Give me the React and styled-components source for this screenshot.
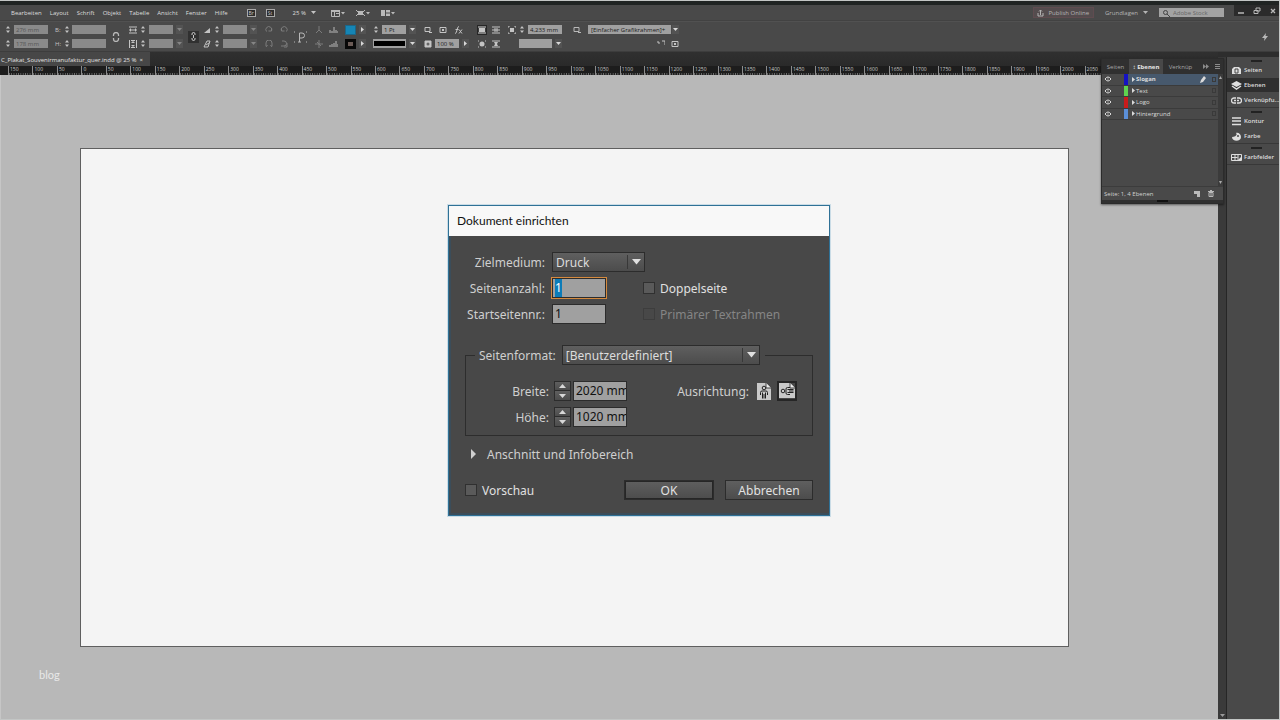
import React, { useEffect, useRef } from "react";
import styled, { createGlobalStyle, css } from "styled-components";

const GlobalStyle = createGlobalStyle`
  *, *::before, *::after { box-sizing: border-box; }
  body { margin: 0; background: #b8b8b8; }
  button, input, select { font: inherit; color: inherit; margin: 0; padding: 0; border: 0; background: none; border-radius: 0; }
  button { cursor: pointer; }
`;

/* ---------- shell ---------- */

const Shell = styled.div`
  display: flex;
  flex-direction: column;
  min-height: 100vh;
  overflow: hidden;
  border: solid #c3c6c5;
  border-width: 1px 1px 1px 0;
  background: #2d2d2d;
  color: #c4c4c4;
  font: 6px/8px "Open Sans", "Noto Sans", sans-serif;
`;

const MenuBar = styled.header`
  display: flex;
  align-items: center;
  height: 20px;
  padding-left: 11px;
  border-top: 4px solid #202423;
  background: #494949;
  border-bottom: 1px solid #424242;
`;

const Menus = styled.nav`
  display: flex;
  gap: 8px;
  margin-right: 19px;
`;

const MenuItem = styled.button`
  color: #dedede;
`;

const BarTools = styled.div`
  display: flex;
  align-items: center;
  gap: ${(p) => p.$gap}px;
  margin-right: ${(p) => p.$after || 0}px;
`;

const BridgeButton = styled.button`
  width: 9px;
  height: 8px;
  border: 1px solid #a9a9a9;
  background: #2c2c2c;
  color: #c8c8c8;
  font-size: 5px;
  line-height: 6px;
  text-align: center;
`;

const IconButton = styled.button`
  display: flex;
  align-items: center;
  justify-content: center;
  color: ${(p) => (p.$dim ? "#7c7c7c" : "#b9b9b9")};
`;

const Spacer = styled.div`
  flex: 1;
`;

const PublishButton = styled.button`
  display: flex;
  align-items: center;
  gap: 4px;
  height: 11px;
  padding: 0 4px 0 3px;
  margin-right: 11px;
  border: 1px solid #604c50;
  background: #544c4e;
  color: #b4b4b4;
`;

const WorkspaceButton = styled.button`
  display: flex;
  align-items: center;
  gap: 5px;
  margin-right: 11px;
  color: #b5b5b5;
`;

const Search = styled.label`
  display: flex;
  align-items: center;
  gap: 3px;
  width: 65px;
  height: 9px;
  padding-left: 3px;
  background: #a3a3a3;
  color: #444;
  input { width: 50px; height: 8px; }
  input::placeholder { color: #666; opacity: 1; }
`;

const WindowControls = styled.div`
  display: flex;
  align-self: flex-start;
  align-items: center;
  justify-content: space-between;
  width: 45px;
  height: 11px;
  margin-left: 10px;
  padding: 0 3px 0 4px;
  background: #2b2b2b;
  color: #ddd;
`;

/* ---------- control bar ---------- */

const ControlBar = styled.div`
  display: flex;
  align-items: center;
  height: 31px;
  padding: 0 10px 0 5px;
  background: #494949;
  border-top: 1px solid #515151;
  border-bottom: 1px solid #3d3d3d;
`;

const Stack = styled.div`
  display: flex;
  flex-direction: column;
  gap: 4px;
  margin-right: ${(p) => p.$after}px;
`;

const Line = styled.div`
  display: flex;
  align-items: center;
  justify-content: ${(p) => (p.$end ? "flex-end" : "flex-start")};
  gap: ${(p) => p.$gap || 3}px;
  height: 10px;
`;

const AxisLabel = styled.span`
  width: 7px;
`;

const BarField = styled.input`
  width: ${(p) => p.$w}px;
  height: 9px;
  padding-left: 2px;
  background: ${(p) => (p.$off ? "#8a8a8a" : "#a0a0a0")};
  color: ${(p) => (p.$off ? "#555" : "#1c1c1c")};
`;

const BarSelect = styled.select`
  appearance: none;
  width: ${(p) => p.$w}px;
  height: 9px;
  padding-left: 3px;
  background: #a0a0a0;
  color: #1c1c1c;
`;

const StrokeSelect = styled(BarSelect)`
  background: #000;
  border: solid #a0a0a0;
  border-width: 2px 1px;
  color: #000;
`;

const ArrowButton = styled.button`
  display: flex;
  align-items: center;
  justify-content: center;
  width: 7px;
  height: 9px;
  background: #535353;
  color: ${(p) => (p.$dim ? "#858585" : "#d8d8d8")};
`;

const LinkBox = styled.button`
  display: flex;
  align-items: center;
  justify-content: center;
  width: 11px;
  height: 12px;
  margin-right: 4px;
  background: #303030;
  color: #c8c8c8;
`;

const ActiveWrap = styled.button`
  display: flex;
  outline: 1px solid #262626;
  background: #3a3a3a;
`;

const Glyph = styled.span`
  display: flex;
  margin-right: ${(p) => p.$after}px;
  color: #b9b9b9;
`;

const Swatch = styled.button`
  width: 11px;
  height: 10px;
  background: ${(p) => (p.$fill ? "#1585b5" : "#6a5a55")};
  border: ${(p) => (p.$fill ? "1px solid #1c6688" : "3px solid #080808")};
`;

/* ---------- document area ---------- */

const Main = styled.div`
  display: flex;
  flex: 1;
`;

const DocumentColumn = styled.div`
  position: relative;
  display: flex;
  flex: 1;
  flex-direction: column;
  min-width: 0;
`;

const TabStrip = styled.div`
  display: flex;
  height: 14px;
  background: linear-gradient(#303030, #2a2a2a);
`;

const DocTab = styled.div`
  display: flex;
  align-items: center;
  gap: 3px;
  width: 150px;
  padding: 1px 0 0 1px;
  background: #474747;
  color: #e2e2e2;
  white-space: nowrap;
`;

const Ruler = styled.div`
  display: grid;
  grid-template-columns: repeat(45, 1fr);
  height: 9px;
  padding: 0 109px 0 8px;
  background: #1d1d1d;
  color: #c8c8c8;
  font-size: 5px;
  line-height: 7px;
`;

const RulerMark = styled.span`
  padding-left: 1px;
  border-left: 1px solid #8d8d8d;
  background: linear-gradient(90deg, #747474 1px, transparent 1px) 0 100% / 10% 2px repeat-x;
`;

const Canvas = styled.main`
  display: flex;
  flex: 1;
  padding: 73px 149px 72px 79px;
  background: #b8b8b8;
  border-left: 1px solid #c6c6c6;
`;

const Artboard = styled.div`
  flex: 1;
  border: 1px solid #5f5f5f;
  background: #f4f4f4;
`;

const Watermark = styled.span`
  position: absolute;
  left: 39px;
  bottom: 37px;
  color: #e8e8e8;
  font: 11px/14px Lato, sans-serif;
`;

const ScrollTrack = styled.div`
  display: flex;
  align-items: flex-end;
  justify-content: center;
  width: 9px;
  margin-top: 5px;
  padding-bottom: 2px;
  background: #3a3a3a;
  border-right: 1px solid #262626;
  color: #999;
`;

/* ---------- dock ---------- */

const Dock = styled.aside`
  width: 52px;
  margin-top: 5px;
  background: #494949;
`;

const DockGroup = styled.div`
  display: flex;
  flex-direction: column;
  gap: 1px;
  border-bottom: 1px solid #383838;
`;

const Grip = styled.span`
  display: block;
  width: 11px;
  height: 2px;
  margin: ${(p) => (p.$bottom ? "0 auto" : "3px auto 0 24px")};
  background: ${(p) => (p.$bottom ? "#111" : "#222")};
`;

const DockItem = styled.button`
  display: flex;
  align-items: center;
  gap: 2px;
  height: 14px;
  padding-left: 4px;
  background: ${(p) => (p.$active ? "#2f2f2f" : "transparent")};
  color: #dedede;
  font-weight: 600;
  white-space: nowrap;
  svg { flex-shrink: 0; }
`;

/* ---------- layers panel ---------- */

const LayersPanel = styled.section`
  position: absolute;
  top: 6px;
  right: -6px;
  width: 123px;
  border: 1px solid #2b2b2b;
  background: #494949;
  box-shadow: 0 1px 2px rgba(0, 0, 0, 0.5);
`;

const PanelTabs = styled.div`
  display: flex;
  align-items: stretch;
  height: 15px;
  background: #303030;
`;

const PanelTab = styled.button`
  width: ${(p) => p.$w}px;
  background: ${(p) => (p.$active ? "#484848" : "transparent")};
  color: ${(p) => (p.$active ? "#e6e6e6" : "#a6a6a6")};
  font-weight: ${(p) => (p.$active ? 700 : 400)};
  text-align: center;
`;

const PanelMenu = styled.div`
  display: flex;
  flex: 1;
  align-items: center;
  justify-content: flex-end;
  gap: 6px;
  padding-right: 3px;
  color: #8b8b8b;
`;

const PanelBody = styled.div`
  display: flex;
  height: 112px;
`;

const LayerList = styled.ul`
  display: grid;
  flex: 1;
  grid-template-rows: repeat(4, 1fr);
  height: 46px;
  margin: 0;
  padding: 0;
  list-style: none;
`;

const LayerRow = styled.li`
  display: flex;
  align-items: center;
  padding: 0 2px 0 3px;
  border-bottom: 1px solid #3b3b3b;
  background: ${(p) => (p.$active ? "linear-gradient(90deg, #494949 22px, #47596d 22px)" : "transparent")};
  color: #dadada;
  font-weight: ${(p) => (p.$active ? 700 : 400)};
`;

const LayerColor = styled.span`
  align-self: stretch;
  width: 4px;
  margin: 0 4px 0 13px;
  background: ${(p) => p.$c};
`;

const LayerName = styled.span`
  flex: 1;
  padding-left: 1px;
`;

const LayerSquare = styled.span`
  width: 4px;
  height: 5px;
  margin-left: 6px;
  border: 1px solid #3a3a3a;
`;

const PanelScroll = styled.div`
  display: flex;
  flex-direction: column;
  align-items: center;
  justify-content: space-between;
  width: 5px;
  padding: 2px 0;
  background: #3b3b3b;
  color: #aaa;
`;

const PanelFooter = styled.div`
  display: flex;
  align-items: center;
  gap: 8px;
  height: 14px;
  padding: 0 9px 0 2px;
  border-top: 1px solid #3c3c3c;
  color: #d0d0d0;
`;

const PanelEdge = styled.div`
  height: 3px;
  background: #303030;
`;

/* ---------- dialog ---------- */

const Overlay = styled.div`
  position: fixed;
  inset: 0;
  display: flex;
  align-items: center;
  justify-content: center;
  padding: 1px 2px 0 0;
`;

const Dialog = styled.form`
  width: 382px;
  border: 1px solid #2f7196;
  box-shadow: 0 0 0 1px rgba(160, 195, 215, 0.5);
  color: #cfcfcf;
  font: 12px/20px "Noto Sans", "Open Sans", sans-serif;
`;

const DialogTitle = styled.h1`
  margin: 0;
  padding-left: 8px;
  background: #f8f8f8;
  color: #111;
  font: 12px/30px Lato, "Open Sans", sans-serif;
`;

const DialogBody = styled.div`
  padding: 16px 16px 15px;
  background: #484848;
  box-shadow: inset 2px -2px 0 #3b4d5a;
`;

const FormGrid = styled.div`
  display: grid;
  grid-template-columns: 80px 84px 1fr;
  grid-auto-rows: 20px;
  gap: 6px 7px;
`;

const FieldLabel = styled.label`
  padding-top: 1px;
  text-align: right;
  white-space: nowrap;
`;

const bevel = css`
  border: 1px solid #2c2c2c;
  background: linear-gradient(#5f5f5f, #4c4c4c);
`;

const SelectWrap = styled.span`
  display: flex;
  position: relative;
  width: ${(p) => p.$w}px;
  height: 20px;
  svg { position: absolute; right: 4px; top: 7px; pointer-events: none; color: #e0e0e0; }
  &::after { content: ""; position: absolute; right: 17px; top: 3px; bottom: 3px; width: 1px; background: #383838; }
`;

const DialogSelect = styled.select`
  ${bevel}
  appearance: none;
  width: 100%;
  padding-left: 3px;
  color: #dcdcdc;
`;

const TextInput = styled.input`
  width: 54px;
  height: 20px;
  padding-left: 2px;
  border: 1px solid #2c2c2c;
  background: #a0a0a0;
  color: #111;
  outline: none;
  &:focus { outline: 1px solid #d58a3e; }
  &::selection { background: #0d7cb8; color: #fff; }
`;

const CheckLabel = styled.label`
  display: flex;
  align-items: center;
  gap: 5px;
  height: 20px;
  white-space: nowrap;
  color: ${(p) => (p.$off ? "#858585" : "#e0e0e0")};
  span { padding-top: 2px; }
`;

const CheckBox = styled.input`
  appearance: none;
  width: 12px;
  height: 12px;
  && { border: 1px solid ${(p) => (p.disabled ? "#3d3d3d" : "#303030")}; }
  && { background: ${(p) => (p.disabled ? "#484848" : "#5a5a5a")}; }
`;

const FormatGroup = styled.fieldset`
  margin: 21px 0 0;
  padding: 16px 15px 8px 8px;
  min-width: 0;
  border: 1px solid #2d2d2d;
`;

const FormatLegend = styled.legend`
  display: flex;
  align-items: center;
  gap: 6px;
  height: 20px;
  margin-left: 1px;
  padding: 0 5px 0 4px;
`;

const SizeLayout = styled.div`
  display: flex;
  align-items: flex-start;
  justify-content: space-between;
`;

const SizeGrid = styled.div`
  display: grid;
  grid-template-columns: 78px 17px 54px;
  grid-auto-rows: 20px;
  column-gap: 2px;
  row-gap: 6px;
  label { padding-right: 3px; }
`;

const Stepper = styled.span`
  display: grid;
  height: 20px;
  grid-template-rows: 1fr 1fr;
  button { ${bevel} display: flex; align-items: center; justify-content: center; color: #d8d8d8; }
  button + button { border-top: 0; }
`;

const Orientation = styled.div`
  display: flex;
  align-items: center;
  gap: 3px;
  height: 20px;
`;

const OrientLabel = styled.span`
  margin-right: 2px;
  padding-top: 2px;
`;

const OrientButton = styled.button`
  display: flex;
  align-items: center;
  justify-content: center;
  width: 20px;
  height: 20px;
  && { border: 2px solid ${(p) => (p.$active ? "#262626" : "transparent")}; }
`;

const Disclosure = styled.button`
  && { display: flex; align-items: center; gap: 10px; height: 20px; margin-top: 8px; padding-left: 6px; }
  span { padding-top: 2px; }
`;

const Actions = styled.div`
  display: flex;
  align-items: center;
  gap: 11px;
  margin-top: 16px;
`;

const ActionButton = styled.button`
  ${bevel}
  width: ${(p) => (p.$primary ? 90 : 88)}px;
  height: 20px;
  && { padding-top: 1px; }
  color: #e2e2e2;
  line-height: 17px;
  outline: ${(p) => (p.$primary ? "1px solid #262626" : "none")};
  outline-offset: -2px;
`;

/* ---------- drawings ---------- */

const Svg = ({ w = 8, h = 8, children }) => (
  <svg width={w} height={h} viewBox={`0 0 ${w} ${h}`} fill="none" stroke="currentColor" aria-hidden="true">
    {children}
  </svg>
);

const solid = { fill: "currentColor", stroke: "none" };
const Down = ({ big }) =>
  big ? <Svg w={9} h={6}><path d="M0 0h9L4.500 5.500z" {...solid} /></Svg> : <Svg w={5} h={3}><path d="M0 0h5L2.500 3z" {...solid} /></Svg>;
const StepArrow = ({ up }) => <Svg w={7} h={4}><path d={up ? "M0 4h7L3.500 0z" : "M0 0h7L3.500 4z"} {...solid} /></Svg>;
const Right = () => <Svg w={3} h={5}><path d="M0 0v5L3 2.500z" {...solid} /></Svg>;
const Steps = () => (
  <Svg w={6} h={9}><path d="M1 3.500h4L3 1zM1 5.500h4L3 8z" {...solid} /></Svg>
);

const paths = {
  frame: <path d="M1 1.500h5v4H1zM5 6.500h3" />,
  effect: <><path d="M1 1.500h6v5H1z" /><path d="M3 3h2v2H3z" {...solid} /></>,
  wide: <><path d="M0 1h8M0 7h8" /><path d="M0 4l2-2v4zM8 4L6 2v4zM2 3.500h4v1H2z" {...solid} /></>,
  tall: <><path d="M.5 0v8M7.500 0v8M2 .5h4M2 7.500h4" /><path d="M4 1l2 2H2zM4 7l2-2H2z" {...solid} /></>,
  angle: <path d="M1 7h6V2z" {...solid} />,
  shear: <path d="M1 7l3-6h3L5 7zM3 5l3-2" />,
  cw: <path d="M1.500 5.500A3 3 0 1 1 6.500 5M6.500 2v3h-3" />,
  ccw: <path d="M6.500 5.500A3 3 0 1 0 1.500 5M1.500 2v3h3" />,
  flipH: <path d="M1 6V3a3 3 0 0 1 6 0v3M2.500 5L1 7M5.500 5L7 7" />,
  flipV: <path d="M2 1h2a2 2 0 0 1 0 5H1M7 3v4H4" />,
  tree: <path d="M4 0v4M4 4L1 7M4 4l3 3" />,
  cross: <path d="M4 0v8M0 4h8M2 2l4 4" />,
  wrapOff: <><path d="M0 1h8M0 7h8" /><path d="M1 2h6v4H1z" {...solid} /></>,
  wrapBox: <><path d="M0 1h8M0 7h8M0 4h8" /><path d="M2 2h4v4H2z" fill="currentColor" opacity=".5" stroke="none" /></>,
  wrapShape: <><path d="M0 1h1M7 1h1M0 7h1M7 7h1" /><circle cx="4" cy="4" r="2.500" {...solid} /></>,
  wrapJump: <><path d="M0 1h8M0 7h8" /><path d="M2 2h4L5 4l1 2H2l1-2z" {...solid} /></>,
  corner: <><path d="M0 2V0h2M6 0h2v2M8 6v2H6M2 8H0V6" /><path d="M2 2h4v4H2z" {...solid} /></>,
  opacity: <><path d="M1 1h6v6H1z" fill="currentColor" /><circle cx="4" cy="4" r="1.500" fill="#666" stroke="none" /></>,
  bolt: <path d="M5 0L1 5h2.500L3 8l4-5H4.500z" {...solid} />,
  clip: <path d="M0 2h2v2M5 1h3v4" />,
};
const Icon = ({ n }) => <Svg>{paths[n]}</Svg>;

const Chain = () => (
  <Svg w={7} h={9}><path d="M2 3V2a1.500 1.500 0 0 1 3 0v1M2 6v1a1.500 1.500 0 0 0 3 0V6M3.500 3v3" /></Svg>
);
const OpenChain = () => (
  <Svg w={8} h={10}><path d="M1.500 4V3a2.500 2.500 0 0 1 5 0v1M1.500 6v1a2.500 2.500 0 0 0 5 0V6" strokeWidth="1.300" /></Svg>
);

const dockIcons = {
  pages: <><path d="M1 3l2-2h5l2 2v5H1z" {...solid} /><path d="M4 3h3v4H4z" stroke="#484848" /></>,
  layers: <><path d="M5.500 0L11 3 5.500 6 0 3z" {...solid} /><path d="M1 5l4.500 3L10 5" strokeWidth="1.500" /></>,
  links: <path d="M5 2H3a2 2 0 0 0 0 5h2M6 2h2a2 2 0 0 1 0 5H6M3 4.500h2M6 4.500h2" strokeWidth="1.300" />,
  stroke: <path d="M1 1h9M1 4h9M1 7.500h9" strokeWidth="1.300" />,
  color: <><path d="M1 5c0 5 9 5 9 0 0-3-3-5-5-4 2 2-1 4-4 4z" {...solid} /><circle cx="7" cy="4" r="1" fill="#484848" stroke="none" /></>,
  swatch: <><path d="M.5 1.500h10v6H.5zM.5 4.500h6M4 1.500v6M7 1.500v6" /><path d="M7 7l3-3v3z" {...solid} /></>,
};
const DockIcon = ({ n }) => <Svg w={11} h={9}>{dockIcons[n]}</Svg>;

const Person = ({ side }) => (
  <svg width="16" height="18" viewBox="0 0 16 18" aria-hidden="true">
    <path d={side ? "M0 1h11l5 5v10H0z" : "M1 1h9l5 5v12H1z"} fill="#c9c9c9" />
    <path d={side ? "M11 1v5h5" : "M10 1v5h5"} fill="#eee" stroke="#444" strokeWidth="1" />
    <g fill="none" stroke="#222" transform={side ? "rotate(-90 8 9)" : "translate(0 1)"}>
      <circle cx="8" cy="5" r="1.800" />
      <path d="M4.500 12V9.500q0-1.500 1.500-1.500h4q1.500 0 1.500 1.500V12M6.500 9.500v6M9.500 9.500v6M8 11v4.500" />
    </g>
  </svg>
);

/* ---------- sections ---------- */

const menus = ["Bearbeiten", "Layout", "Schrift", "Objekt", "Tabelle", "Ansicht", "Fenster", "Hilfe"];

function TopMenu() {
  return (
    <MenuBar>
      <Menus>{menus.map((m) => <MenuItem key={m} type="button">{m}</MenuItem>)}</Menus>
      <BarTools $gap={10} $after={18}>
        <BridgeButton type="button">Br</BridgeButton>
        <BridgeButton type="button">St</BridgeButton>
      </BarTools>
      <BarTools $gap={5} $after={15}>
        <MenuItem type="button">25 %</MenuItem>
        <Down />
      </BarTools>
      <BarTools $gap={11}>
        <IconButton type="button" aria-label="Anzeigeoptionen">
          <Svg w={14}><path d="M.5 1.500h8v6h-8zM3.500 3v4M5 4.500h3" /><path d="M0 1h9v2H0zM10 3h4l-2 2.500z" {...solid} /></Svg>
        </IconButton>
        <IconButton type="button" aria-label="Bildschirmmodus">
          <Svg w={14}><path d="M0 1l2 2M9 1L7 3M0 7l2-2M9 7L7 5" /><path d="M2 2h5v4H2zM10 3h4l-2 2.500z" {...solid} /></Svg>
        </IconButton>
        <IconButton type="button" aria-label="Dokumente anordnen">
          <Svg w={14}><path d="M0 1h4v6H0zM5 1h4v2.500H5zM5 4.500h4V7H5zM10 3h4l-2 2.500z" {...solid} /></Svg>
        </IconButton>
      </BarTools>
      <Spacer />
      <PublishButton type="button"><Svg w={7}><path d="M1 4v3h5V4M3.500 6V1M2 2.500L3.500 1 5 2.500" /></Svg>Publish Online</PublishButton>
      <WorkspaceButton type="button">Grundlagen<Down /></WorkspaceButton>
      <Search>
        <Svg><circle cx="3.500" cy="3.500" r="2" /><path d="M5 5l3 3" /></Svg>
        <input aria-label="Adobe Stock" placeholder="Adobe Stock" />
      </Search>
      <WindowControls>
        <IconButton type="button" aria-label="Minimieren"><Svg w={6}><path d="M0 6h6" strokeWidth="1.500" /></Svg></IconButton>
        <IconButton type="button" aria-label="Verkleinern"><Svg><path d="M3 1h4v3H3zM1 3.500h4v3H1z" /></Svg></IconButton>
        <IconButton type="button" aria-label="Schließen"><Svg w={6}><path d="M1 2l4 4M5 2L1 6" strokeWidth="1.300" /></Svg></IconButton>
      </WindowControls>
    </MenuBar>
  );
}

const Arrow = ({ label, dim, side }) => (
  <ArrowButton type="button" aria-label={label} $dim={dim}>{side ? <Right /> : <Down />}</ArrowButton>
);

function Controls() {
  return (
    <ControlBar>
      <Stack $after={7}>
        <Line><Steps /><BarField aria-label="X-Position" $w={34} $off defaultValue="276 mm" /></Line>
        <Line><Steps /><BarField aria-label="Y-Position" $w={34} $off defaultValue="178 mm" /></Line>
      </Stack>
      <Stack $after={6}>
        <Line $gap={2}><AxisLabel>B:</AxisLabel><Steps /><BarField aria-label="Breite des Objekts" $w={34} $off /></Line>
        <Line $gap={2}><AxisLabel>H:</AxisLabel><Steps /><BarField aria-label="Höhe des Objekts" $w={34} $off /></Line>
      </Stack>
      <Glyph $after={9}><OpenChain /></Glyph>
      <Stack $after={5}>
        {[["wide", "Skalierung X"], ["tall", "Skalierung Y"]].map(([n, l]) => (
          <Line key={n}><Icon n={n} /><Steps /><BarField aria-label={l} $w={24} $off /><Arrow label={l + " wählen"} dim /></Line>
        ))}
      </Stack>
      <LinkBox type="button" aria-label="Proportionen beibehalten"><Chain /></LinkBox>
      <Stack $after={8}>
        {[["angle", "Drehwinkel"], ["shear", "Scherwinkel"]].map(([n, l]) => (
          <Line key={n}><Icon n={n} /><Steps /><BarField aria-label={l} $w={24} $off /><Arrow label={l + " wählen"} dim /></Line>
        ))}
      </Stack>
      <Stack $after={6}>
        <Line $gap={7}>
          <IconButton $dim type="button" aria-label="Im Uhrzeigersinn drehen"><Icon n="cw" /></IconButton>
          <IconButton $dim type="button" aria-label="Gegen Uhrzeigersinn drehen"><Icon n="ccw" /></IconButton>
        </Line>
        <Line $gap={7}>
          <IconButton $dim type="button" aria-label="Horizontal spiegeln"><Icon n="flipH" /></IconButton>
          <IconButton $dim type="button" aria-label="Vertikal spiegeln"><Icon n="flipV" /></IconButton>
        </Line>
      </Stack>
      <Glyph $after={7}>
        <Svg w={14} h={14}><path d="M5.500 12V3h2.500a2 2 0 0 1 0 5H5.500M4 12h3" /><path d="M0 2h2M12 2h2M0 12h2M12 12h2" strokeDasharray="1 1" /></Svg>
      </Glyph>
      <Stack $after={7}>
        <Line $gap={6}>
          <IconButton $dim type="button" aria-label="Container auswählen"><Icon n="tree" /></IconButton>
          <IconButton type="button" aria-label="Vorheriges Objekt"><Svg w={9}><path d="M1 7V4M3 7V5M5 7V1M7 7V4M9 7V5" /></Svg></IconButton>
        </Line>
        <Line $gap={6}>
          <IconButton $dim type="button" aria-label="Inhalt auswählen"><Icon n="cross" /></IconButton>
          <IconButton type="button" aria-label="Nächstes Objekt"><Svg w={9}><path d="M1 7V5M3 7V4M5 7V3M7 7V1M9 7V4" /></Svg></IconButton>
        </Line>
      </Stack>
      <Stack $after={7}>
        <Line><Swatch type="button" aria-label="Fläche" $fill /><Arrow label="Fläche wählen" side /></Line>
        <Line><Swatch type="button" aria-label="Kontur" /><Arrow label="Kontur wählen" side /></Line>
      </Stack>
      <Stack $after={8}>
        <Line><Steps /><BarField aria-label="Konturstärke" $w={24} defaultValue="1 Pt" /><Arrow label="Stärke wählen" /></Line>
        <Line><StrokeSelect aria-label="Konturart" $w={33}><option>Durchgezogen</option></StrokeSelect><Arrow label="Art wählen" /></Line>
      </Stack>
      <Stack $after={9}>
        <Line $gap={7}>
          <Icon n="frame" />
          <Icon n="effect" />
          <Svg w={9}><path d="M1 7.500q1.500 0 2-3.500t2-3.500M1.500 3.500h3M5 3.500l3 4M8 3.500l-3 4" /></Svg>
        </Line>
        <Line><Icon n="opacity" /><BarField aria-label="Deckkraft" $w={24} defaultValue="100 %" /><Arrow label="Deckkraft wählen" side /></Line>
      </Stack>
      <Stack $after={8}>
        <Line $gap={6}>
          <ActiveWrap type="button" aria-label="Kein Textumfluss"><Icon n="wrapOff" /></ActiveWrap>
          <Icon n="wrapBox" />
        </Line>
        <Line $gap={6}><Icon n="wrapShape" /><Icon n="wrapJump" /></Line>
      </Stack>
      <Stack $after={11}>
        <Line><Icon n="corner" /><Steps /><BarField aria-label="Eckengröße" $w={34} defaultValue="4,233 mm" /></Line>
        <Line $end><BarSelect aria-label="Eckenform" $w={33}><option></option></BarSelect><Arrow label="Ecken wählen" /></Line>
      </Stack>
      <Stack $after={0}>
        <Line $gap={1}>
          <Glyph $after={6}><Icon n="frame" /></Glyph>
          <BarSelect aria-label="Objektformat" $w={83}><option>[Einfacher Grafikrahmen]+</option></BarSelect>
          <Arrow label="Format wählen" />
        </Line>
        <Line $end $gap={6}><Icon n="clip" /><Icon n="effect" /></Line>
      </Stack>
      <Spacer />
      <IconButton type="button" aria-label="Schnell anwenden"><Icon n="bolt" /></IconButton>
    </ControlBar>
  );
}

const layers = [
  ["Slogan", "#1512c4"],
  ["Text", "#5fd34f"],
  ["Logo", "#c91c1c"],
  ["Hintergrund", "#5b8fd8"],
];

function Layers() {
  return (
    <LayersPanel>
      <PanelTabs>
        <PanelTab type="button" $w={27}>Seiten</PanelTab>
        <PanelTab type="button" $w={34} $active>↕ Ebenen</PanelTab>
        <PanelTab type="button" $w={35}>Verknüp</PanelTab>
        <PanelMenu>
          <Svg w={6} h={5}><path d="M0 0l3 2.500L0 5zM3 0l3 2.500L3 5z" {...solid} /></Svg>
          <Svg w={5} h={5}><path d="M0 .5h5M0 2.500h5M0 4.500h5" /></Svg>
        </PanelMenu>
      </PanelTabs>
      <PanelBody>
        <LayerList>
          {layers.map(([name, c], i) => (
            <LayerRow key={name} $active={i === 0}>
              <Svg w={6} h={6}><path d="M0 3q3-4 6 0-3 4-6 0z" /><path d="M2.500 2.500h1v1h-1z" {...solid} /></Svg>
              <LayerColor $c={c} />
              <Right />
              <LayerName>{name}</LayerName>
              {i === 0 && <Svg w={6} h={7}><path d="M0 7l1-3 3-4 2 2-3 4z" {...solid} /></Svg>}
              <LayerSquare />
            </LayerRow>
          ))}
        </LayerList>
        <PanelScroll><Svg w={3} h={3}><path d="M0 3h3L1.500 0z" {...solid} /></Svg><Svg w={3} h={3}><path d="M0 0h3L1.500 3z" {...solid} /></Svg></PanelScroll>
      </PanelBody>
      <PanelFooter>
        <span>Seite: 1, 4 Ebenen</span>
        <Spacer />
        <IconButton type="button" aria-label="Neue Ebene"><Svg w={6} h={6}><path d="M0 0h6v6H3V3H0z" {...solid} /></Svg></IconButton>
        <IconButton type="button" aria-label="Ebene löschen"><Svg w={6} h={7}><path d="M0 1.500h6M2 .5h2M1 2.500h4v4H1zM3 3v3" /></Svg></IconButton>
      </PanelFooter>
      <PanelEdge><Grip $bottom /></PanelEdge>
    </LayersPanel>
  );
}

const dock = [
  [["pages", "Seiten"], ["layers", "Ebenen"], ["links", "Verknüpfu..."]],
  [["stroke", "Kontur"], ["color", "Farbe"]],
  [["swatch", "Farbfelder"]],
];

function DocumentSetup() {
  const first = useRef(null);
  useEffect(() => {
    first.current.focus();
    first.current.select();
  }, []);
  return (
    <Overlay>
      <Dialog role="dialog" aria-labelledby="setup-title" onSubmit={(e) => e.preventDefault()}>
        <DialogTitle id="setup-title">Dokument einrichten</DialogTitle>
        <DialogBody>
          <FormGrid>
            <FieldLabel htmlFor="medium">Zielmedium:</FieldLabel>
            <SelectWrap $w={93}>
              <DialogSelect id="medium"><option>Druck</option></DialogSelect><Down big />
            </SelectWrap>
            <span />
            <FieldLabel htmlFor="pages">Seitenanzahl:</FieldLabel>
            <TextInput id="pages" ref={first} defaultValue="1" />
            <CheckLabel><CheckBox type="checkbox" /><span>Doppelseite</span></CheckLabel>
            <FieldLabel htmlFor="start">Startseitennr.:</FieldLabel>
            <TextInput id="start" defaultValue="1" />
            <CheckLabel $off><CheckBox type="checkbox" disabled /><span>Primärer Textrahmen</span></CheckLabel>
          </FormGrid>
          <FormatGroup>
            <FormatLegend>
              <FieldLabel htmlFor="format">Seitenformat:</FieldLabel>
              <SelectWrap $w={198}>
                <DialogSelect id="format"><option>[Benutzerdefiniert]</option></DialogSelect><Down big />
              </SelectWrap>
            </FormatLegend>
            <SizeLayout>
              <SizeGrid>
                {[["width", "Breite:", "2020 mm"], ["height", "Höhe:", "1020 mm"]].map(([id, l, v]) => (
                  <React.Fragment key={id}>
                    <FieldLabel htmlFor={id}>{l}</FieldLabel>
                    <Stepper>
                      <button type="button" aria-label={l + " erhöhen"}><StepArrow up /></button>
                      <button type="button" aria-label={l + " verringern"}><StepArrow /></button>
                    </Stepper>
                    <TextInput id={id} defaultValue={v} />
                  </React.Fragment>
                ))}
              </SizeGrid>
              <Orientation>
                <OrientLabel>Ausrichtung:</OrientLabel>
                <OrientButton type="button" aria-label="Hochformat"><Person /></OrientButton>
                <OrientButton type="button" aria-label="Querformat" $active><Person side /></OrientButton>
              </Orientation>
            </SizeLayout>
          </FormatGroup>
          <Disclosure type="button">
            <Svg w={6} h={10}><path d="M0 0v10l5-5z" {...solid} /></Svg><span>Anschnitt und Infobereich</span>
          </Disclosure>
          <Actions>
            <CheckLabel><CheckBox type="checkbox" /><span>Vorschau</span></CheckLabel>
            <Spacer />
            <ActionButton $primary type="submit">OK</ActionButton>
            <ActionButton type="button">Abbrechen</ActionButton>
          </Actions>
        </DialogBody>
      </Dialog>
    </Overlay>
  );
}

export default function App() {
  return (
    <>
      <GlobalStyle />
      <Shell>
        <TopMenu />
        <Controls />
        <Main>
          <DocumentColumn>
            <TabStrip><DocTab>C_Plakat_Souvenirmanufaktur_quer.indd @ 25 %<span>×</span></DocTab></TabStrip>
            <Ruler>
              {Array.from({ length: 45 }, (_, i) => <RulerMark key={i}>{Math.abs(i * 50 - 150)}</RulerMark>)}
            </Ruler>
            <Canvas><Artboard /></Canvas>
            <Watermark>blog</Watermark>
            <Layers />
          </DocumentColumn>
          <ScrollTrack><Down /></ScrollTrack>
          <Dock>
            {dock.map((items, i) => (
              <DockGroup key={i}>
                <Grip />
                {items.map(([n, label]) => (
                  <DockItem key={n} type="button" $active={n === "layers"}><DockIcon n={n} />{label}</DockItem>
                ))}
              </DockGroup>
            ))}
          </Dock>
        </Main>
      </Shell>
      <DocumentSetup />
    </>
  );
}
